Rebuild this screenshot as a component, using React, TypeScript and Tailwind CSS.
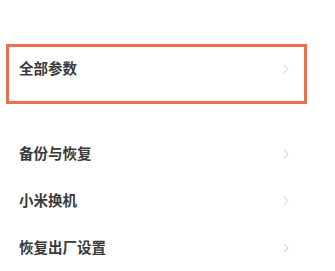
import React from "react";

const Chevron = () => (
  <svg width="6" height="10" viewBox="0 0 6 10" fill="none">
    <path d="M1 1l4 4-4 4" stroke="#e0e0e0" strokeWidth="1.2" strokeLinecap="round" strokeLinejoin="round" />
  </svg>
);

const font = { fontFamily: '"Noto Sans CJK SC", "Noto Sans", sans-serif' };

function Row({ label }: { label: string }) {
  return (
    <div className="flex h-[47px] items-center justify-between pl-[19px] pr-[46px]">
      <span className="text-[14.5px] leading-none font-semibold text-[#3a3a3a]">{label}</span>
      <Chevron />
    </div>
  );
}

export default function App() {
  return (
    <div className="w-[335px] h-[271px] bg-white overflow-hidden" style={font}>
      <div className="pt-[44px] pl-[6px]">
        <div className="w-[301px] h-[60px] border-[3px] border-[#e8704e]">
          <div className="flex h-[43px] items-center justify-between pl-[10px] pr-[15px]">
            <span className="text-[14.5px] leading-none font-semibold text-[#3a3a3a]">全部参数</span>
            <Chevron />
          </div>
        </div>
      </div>
      <div className="mt-[26px]">
        <Row label="备份与恢复" />
        <Row label="小米换机" />
        <Row label="恢复出厂设置" />
      </div>
    </div>
  );
}
